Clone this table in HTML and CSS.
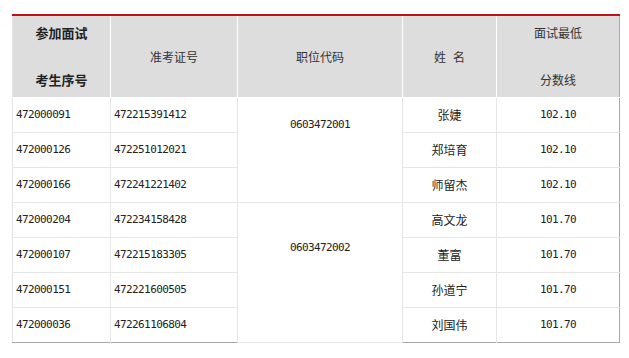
FILE: index.html
```html
<!DOCTYPE html>
<html lang="zh">
<head>
<meta charset="utf-8">
<title>面试分数线</title>
<link rel="stylesheet" href="styles.css">
</head>
<body>
<div class="wrap">
<table class="score">
  <colgroup>
    <col class="c1"><col class="c2"><col class="c3"><col class="c4"><col class="c5">
  </colgroup>
  <thead>
    <tr>
      <th class="bold"><div class="two"><span>参加面试</span><span>考生序号</span></div></th>
      <th>准考证号</th>
      <th>职位代码</th>
      <th>姓<span class="gap"></span>名</th>
      <th><div class="two"><span>面试最低</span><span>分数线</span></div></th>
    </tr>
  </thead>
  <tbody>
    <tr>
      <td class="num left">472000091</td>
      <td class="num left">472215391412</td>
      <td class="num code" rowspan="3">0603472001</td>
      <td class="name">张婕</td>
      <td class="num">102.10</td>
    </tr>
    <tr>
      <td class="num left">472000126</td>
      <td class="num left">472251012021</td>
      <td class="name">郑培育</td>
      <td class="num">102.10</td>
    </tr>
    <tr>
      <td class="num left">472000166</td>
      <td class="num left">472241221402</td>
      <td class="name">师留杰</td>
      <td class="num">102.10</td>
    </tr>
    <tr>
      <td class="num left">472000204</td>
      <td class="num left">472234158428</td>
      <td class="num code" rowspan="4">0603472002</td>
      <td class="name">高文龙</td>
      <td class="num">101.70</td>
    </tr>
    <tr>
      <td class="num left">472000107</td>
      <td class="num left">472215183305</td>
      <td class="name">董富</td>
      <td class="num">101.70</td>
    </tr>
    <tr>
      <td class="num left">472000151</td>
      <td class="num left">472221600505</td>
      <td class="name">孙道宁</td>
      <td class="num">101.70</td>
    </tr>
    <tr>
      <td class="num left">472000036</td>
      <td class="num left">472261106804</td>
      <td class="name">刘国伟</td>
      <td class="num">101.70</td>
    </tr>
  </tbody>
</table>
</div>
</body>
</html>
```

FILE: styles.css
```css
html, body {
  margin: 0;
  padding: 0;
  background: #ffffff;
}
.wrap {
  padding: 14px 0 0 12px;
}
.score {
  border-collapse: collapse;
  table-layout: fixed;
  width: 608px;
  font-family: "Noto Sans CJK SC", "Liberation Sans", sans-serif;
  font-size: 12px;
  color: #333;
  border-top: 2px solid #c0101a;
  border-right: 1px solid #a8a8a8;
  border-bottom: 1px solid #a8a8a8;
  border-left: 1px solid #e4e4e4;
}
.c1 { width: 98px; }
.c2 { width: 127px; }
.c3 { width: 165px; }
.c4 { width: 94px; }
.c5 { width: 123px; }

.score th {
  background: #dddddd;
  font-weight: normal;
  height: 81px;
  padding: 0;
  text-align: center;
  vertical-align: middle;
  border-left: 1px solid #ffffff;
  border-bottom: 1px solid #ffffff;
  line-height: 16px;
}
.score th:first-child {
  border-left: none;
}
.score th.bold {
  font-weight: bold;
  font-size: 13px;
  color: #222;
}
.two {
  display: flex;
  flex-direction: column;
  align-items: center;
  gap: 31px;
}
.gap {
  display: inline-block;
  width: 7px;
}
.score td {
  height: 34px;
  padding: 0;
  border: 1px solid #e6e6e6;
  text-align: center;
  vertical-align: middle;
  line-height: 16px;
}
.score td:first-child {
  border-left: none;
}
.score td:last-child {
  border-right: none;
}
.score tbody tr:last-child td {
  border-bottom: none;
}
.num {
  font-family: "DejaVu Sans Mono", "Liberation Mono", monospace;
  font-size: 11px;
  letter-spacing: -0.6px;
  color: #222;
}
.left {
  text-align: left !important;
  padding-left: 3px !important;
}
.name {
  font-size: 12px;
  color: #222;
}
.score td.code {
  padding-bottom: 50px;
}
```
